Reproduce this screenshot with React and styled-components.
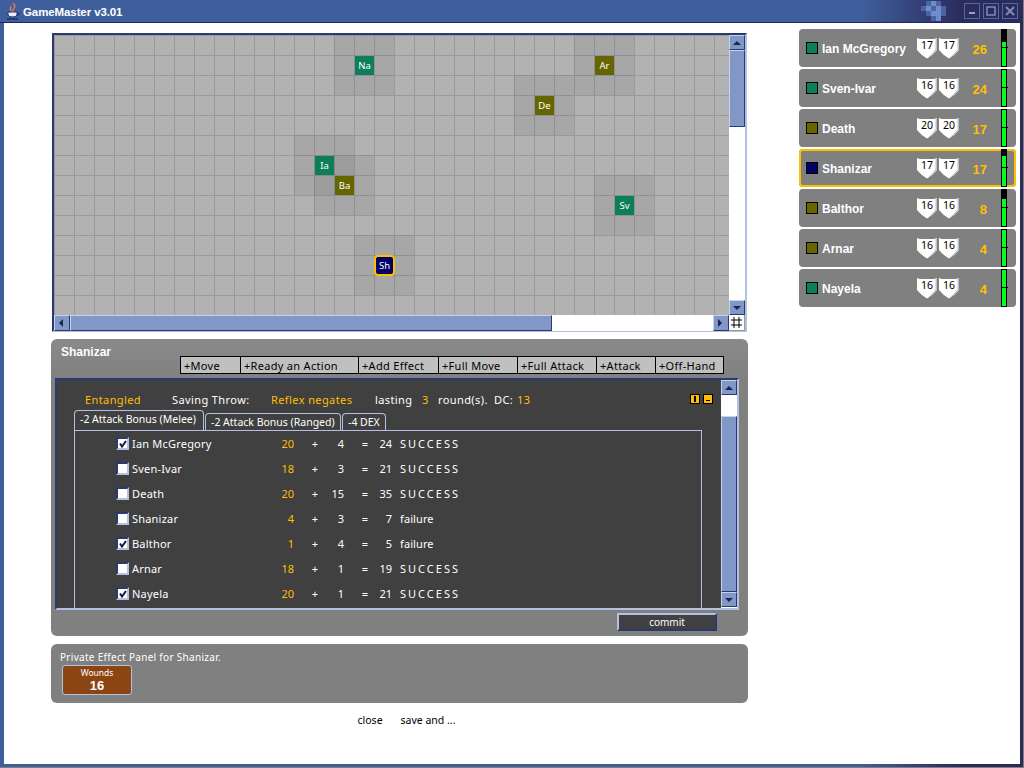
import React from "react";
import styled, { createGlobalStyle } from "styled-components";

const GlobalStyle = createGlobalStyle`
  html, body { margin: 0; padding: 0; background: #fff; }
  body { font-family: "Noto Sans", "DejaVu Sans", sans-serif; font-size: 11px; }
`;

const YELLOW = "#ffbf00";
const LIGHT = "#b4c0e0";
const NAVY = "#2a3a70";
const GREEN = "#0a7f5a";
const OLIVE = "#666600";
const BLUE = "#000066";

const Frame = styled.div`
  width: 1024px;
  height: 768px;
  box-sizing: border-box;
  display: flex;
  flex-direction: column;
  background: linear-gradient(90deg, #3f5f9c 0%, #3f5f9c 84%, #2c2c5c 94%, #2c2c5c 100%);
  border-right: 1px solid #808080;
  border-bottom: 1px solid #808080;
  overflow: hidden;
  padding: 0 3px 3px 4px;
`;

const TitleBar = styled.div`
  height: 22px;
  flex: none;
  margin: 0 -3px 0 -4px;
  padding: 0 5px 0 6px;
  display: flex;
  align-items: center;
  gap: 3px;
  color: #fff;
  font: bold 11.5px "Liberation Sans", sans-serif;
  border-bottom: 1px solid #1e2a58;
`;

const TitleText = styled.span`
  flex: 1;
  letter-spacing: -0.1px;
  margin-top: 1px;
`;

const WinButton = styled.div`
  width: 16px;
  height: 16px;
  box-sizing: border-box;
  border: 1px solid #4a6aa8;
  display: flex;
  align-items: center;
  justify-content: center;
`;

const Body = styled.div`
  flex: 1;
  background: #fff;
  display: flex;
  padding: 10px 4px 0 47px;
  gap: 51px;
`;

const LeftColumn = styled.div`
  width: 697px;
  display: flex;
  flex-direction: column;
`;

const MapFrame = styled.div`
  margin-left: 1px;
  width: 695px;
  height: 299px;
  box-sizing: border-box;
  border: 2px solid;
  border-color: ${NAVY} ${LIGHT} ${LIGHT} ${NAVY};
  display: grid;
  grid-template-columns: 675px 16px;
  grid-template-rows: 280px 16px;
`;

const MapView = styled.div`
  position: relative;
  overflow: hidden;
  background-color: #b2b2b2;
  background-image:
    linear-gradient(90deg, #999 1px, transparent 1px),
    linear-gradient(#999 1px, transparent 1px);
  background-size: 20px 20px;
`;

const Glow = styled.div`
  position: absolute;
  left: ${(p) => p.$x - 20}px;
  top: ${(p) => p.$y - 20}px;
  width: 60px;
  height: 60px;
  background: rgba(0, 0, 0, 0.06);
`;

const Token = styled.div`
  position: absolute;
  left: ${(p) => (p.$active ? p.$x : p.$x + 1)}px;
  top: ${(p) => (p.$active ? p.$y : p.$y + 1)}px;
  width: ${(p) => (p.$active ? 21 : 19)}px;
  height: ${(p) => (p.$active ? 21 : 19)}px;
  box-sizing: border-box;
  background: ${(p) => p.$color};
  color: #fff;
  font-size: 9.5px;
  display: flex;
  align-items: center;
  justify-content: center;
  ${(p) => p.$active && `border: 2px solid ${YELLOW}; border-radius: 4px;`}
`;

const ScrollTrack = styled.div`
  background: #fff;
  display: flex;
  flex-direction: ${(p) => (p.$horizontal ? "row" : "column")};
`;

const ArrowButton = styled.div`
  flex: none;
  width: 16px;
  height: ${(p) => (p.$horizontal ? 16 : 15)}px;
  box-sizing: border-box;
  background: #8097c8;
  border: 1px solid;
  border-color: #c8d2ec ${NAVY} ${NAVY} #c8d2ec;
  display: flex;
  align-items: center;
  justify-content: center;
`;

const Thumb = styled.div`
  box-sizing: border-box;
  background: #8097c8;
  border: 1px solid;
  border-color: #c8d2ec ${NAVY} ${NAVY} #c8d2ec;
  ${(p) => (p.$horizontal ? `width: ${p.$size}px;` : `height: ${p.$size}px;`)}
`;

const Spacer = styled.div`
  flex: 1;
  ${(p) => p.$size && `flex: none; ${p.$horizontal ? "width" : "height"}: ${p.$size}px;`}
`;

const Corner = styled.div`
  display: flex;
  align-items: center;
  justify-content: center;
  background: #fff;
  border-right: 1px solid #999;
  border-bottom: 1px solid #999;
`;

const Panel = styled.div`
  margin-top: ${(p) => p.$top}px;
  height: ${(p) => p.$height}px;
  background: ${(p) => (p.$flat ? "#808080" : "linear-gradient(#8a8a8a, #808080 40px)")};
  border-radius: 6px;
  color: #fff;
  position: relative;
  display: flex;
  flex-direction: column;
`;

const PanelHead = styled.div`
  height: 39px;
  flex: none;
  display: flex;
  box-sizing: border-box;
  padding: 6px 24px 0 10px;
`;

const PanelTitle = styled.div`
  font: bold 12px "Liberation Sans", sans-serif;
  width: 119px;
`;

const Toolbar = styled.div`
  display: flex;
  width: 544px;
  height: 18px;
  margin-top: 11px;
  background: #c0c0c0;
  border: 1px solid #000;
  box-sizing: border-box;
`;

const ToolButton = styled.div`
  width: ${(p) => p.$w}px;
  box-sizing: border-box;
  border-right: 1px solid #000;
  color: #000;
  padding-left: 3px;
  line-height: 17px;
  letter-spacing: 0.3px;
  &:last-child { border-right: 0; }
`;

const Pane = styled.div`
  margin: 0 9px 0 4px;
  height: 232px;
  flex: none;
  box-sizing: border-box;
  display: flex;
  background: #404040;
  border: 2px solid;
  border-color: ${NAVY} ${LIGHT} ${LIGHT} ${NAVY};
  overflow: hidden;
`;

const PaneMain = styled.div`
  flex: 1;
  display: flex;
  flex-direction: column;
  padding: 9px 19px 0 17px;
  min-width: 0;
`;

const EffectRow = styled.div`
  display: flex;
  height: 20px;
  flex: none;
  align-items: center;
  padding-left: 11px;
  letter-spacing: 0.4px;
`;

const Cell = styled.span`
  width: ${(p) => p.$w}px;
  flex: none;
  color: ${(p) => (p.$accent ? YELLOW : "#fff")};
`;

const MiniButtons = styled.div`
  margin-left: auto;
  display: flex;
  gap: 3px;
  margin-right: -11px;
  margin-top: -1px;
`;

const MiniButton = styled.div`
  width: 10px;
  height: 10px;
  box-sizing: border-box;
  background: ${YELLOW};
  border: 1px solid #000;
  display: flex;
  align-items: ${(p) => (p.$minus ? "flex-end" : "center")};
  justify-content: center;
  padding-bottom: ${(p) => (p.$minus ? 2 : 0)}px;
  &::after {
    content: "";
    display: block;
    background: #000;
    width: ${(p) => (p.$minus ? 4 : 2)}px;
    height: ${(p) => (p.$minus ? 1 : 6)}px;
  }
`;

const TabStrip = styled.div`
  display: flex;
  align-items: flex-end;
  height: 21px;
  flex: none;
  gap: 1px;
`;

const Tab = styled.div`
  box-sizing: border-box;
  width: ${(p) => p.$w}px;
  height: ${(p) => (p.$active ? 20 : 17)}px;
  border: 1px solid ${LIGHT};
  border-bottom: 0;
  border-radius: 4px 4px 0 0;
  padding: 1px 0 0 5px;
  font-size: 10.5px;
  white-space: nowrap;
`;

const TabBody = styled.div`
  flex: 1;
  box-sizing: border-box;
  border: 1px solid ${LIGHT};
  border-bottom: 0;
`;

const Row = styled.div`
  height: 25px;
  display: flex;
  align-items: center;
`;

const Check = styled.div`
  margin-left: 41px;
  width: 13px;
  height: 13px;
  box-sizing: border-box;
  flex: none;
  background: #fff;
  border: 2px solid;
  border-color: ${NAVY} ${LIGHT} ${LIGHT} ${NAVY};
  display: flex;
  align-items: center;
  justify-content: center;
`;

const Name = styled.span`
  margin-left: 3px;
  width: 140px;
  letter-spacing: 0.2px;
`;

const Num = styled.span`
  width: ${(p) => p.$w}px;
  text-align: right;
  color: ${(p) => (p.$accent ? YELLOW : "#fff")};
  flex: none;
`;

const Result = styled.span`
  margin-left: 8px;
  letter-spacing: ${(p) => (p.$caps ? 2 : 0.1)}px;
`;

const PaneBar = styled.div`
  width: 16px;
  flex: none;
  background: #fff;
  display: flex;
  flex-direction: column;
  margin-left: auto;
`;

const CommitRow = styled.div`
  display: flex;
  justify-content: flex-end;
  padding: 3px 31px 0 0;
`;

const Commit = styled.div`
  width: 100px;
  height: 18px;
  box-sizing: border-box;
  background: #404040;
  border: 2px solid;
  border-color: ${LIGHT} ${NAVY} ${NAVY} ${LIGHT};
  text-align: center;
  font-size: 10px;
  line-height: 14px;
`;

const PrivateText = styled.div`
  padding: 6px 0 0 9px;
  height: 21px;
  box-sizing: border-box;
  font-size: 10px;
  letter-spacing: 0.3px;
`;

const Wounds = styled.div`
  margin-left: 11px;
  width: 70px;
  height: 30px;
  box-sizing: border-box;
  background: #8b4513;
  border: 1px solid ${LIGHT};
  border-radius: 3px;
  text-align: center;
  font-size: 8.5px;
  line-height: 12px;
  padding-top: 1px;
`;

const WoundValue = styled.div`
  font: bold 13px/14px "Liberation Sans", sans-serif;
`;

const Footer = styled.div`
  margin-top: 10px;
  display: flex;
  justify-content: center;
  gap: 18px;
  color: #000;
  padding-left: 14px;
  font-size: 10.5px;
  line-height: 15px;
`;

const Roster = styled.div`
  width: 217px;
  display: flex;
  flex-direction: column;
  gap: 2px;
  margin-top: -4px;
`;

const Card = styled.div`
  height: 38px;
  box-sizing: border-box;
  background: #808080;
  border-radius: 4px;
  display: flex;
  align-items: center;
  padding-left: 7px;
  color: #fff;
  ${(p) => p.$active && `box-shadow: inset 0 0 0 2px ${YELLOW};`}
`;

const Swatch = styled.div`
  width: 12px;
  height: 12px;
  flex: none;
  box-sizing: border-box;
  background: ${(p) => p.$color};
  border: 1px solid #000;
`;

const CardName = styled.div`
  width: 95px;
  margin: 1px 0 0 4px;
  font: bold 12px "Liberation Sans", sans-serif;
`;

const Shields = styled.div`
  display: flex;
  gap: 2px;
`;

const Hp = styled.div`
  width: 28px;
  margin-top: 2px;
  text-align: right;
  color: ${YELLOW};
  font: bold 13px "Liberation Sans", sans-serif;
`;

const HpBar = styled.div`
  margin-left: 14px;
  width: 6px;
  height: 38px;
  box-sizing: border-box;
  background: #000;
  border: 1px solid #000;
  display: flex;
  flex-direction: column;
  justify-content: flex-end;
  position: relative;
  &::after {
    content: "";
    position: absolute;
    left: 0;
    right: -2px;
    top: 17px;
    height: 1px;
    background: #000;
  }
`;

const HpFill = styled.div`
  background: #00ff22;
  flex: none;
`;

const tokens = [
  { label: "Na", x: 300, y: 20, color: GREEN },
  { label: "Ar", x: 540, y: 20, color: OLIVE },
  { label: "De", x: 480, y: 60, color: OLIVE },
  { label: "Ia", x: 260, y: 120, color: GREEN },
  { label: "Ba", x: 280, y: 140, color: OLIVE },
  { label: "Sv", x: 560, y: 160, color: GREEN },
  { label: "Sh", x: 320, y: 220, color: BLUE, active: true },
];

const roster = [
  { name: "Ian McGregory", color: GREEN, a: 17, b: 17, hp: 26, fill: 24 },
  { name: "Sven-Ivar", color: GREEN, a: 16, b: 16, hp: 24, fill: 36 },
  { name: "Death", color: OLIVE, a: 20, b: 20, hp: 17, fill: 36 },
  { name: "Shanizar", color: BLUE, a: 17, b: 17, hp: 17, fill: 30, active: true },
  { name: "Balthor", color: OLIVE, a: 16, b: 16, hp: 8, fill: 27 },
  { name: "Arnar", color: OLIVE, a: 16, b: 16, hp: 4, fill: 36 },
  { name: "Nayela", color: GREEN, a: 16, b: 16, hp: 4, fill: 36 },
];

const rolls = [
  { name: "Ian McGregory", on: true, roll: 20, bonus: 4, total: 24, result: "SUCCESS" },
  { name: "Sven-Ivar", on: false, roll: 18, bonus: 3, total: 21, result: "SUCCESS" },
  { name: "Death", on: false, roll: 20, bonus: 15, total: 35, result: "SUCCESS" },
  { name: "Shanizar", on: false, roll: 4, bonus: 3, total: 7, result: "failure" },
  { name: "Balthor", on: true, roll: 1, bonus: 4, total: 5, result: "failure" },
  { name: "Arnar", on: false, roll: 18, bonus: 1, total: 19, result: "SUCCESS" },
  { name: "Nayela", on: true, roll: 20, bonus: 1, total: 21, result: "SUCCESS" },
];

const actions = [
  ["+Move", 60],
  ["+Ready an Action", 118],
  ["+Add Effect", 80],
  ["+Full Move", 79],
  ["+Full Attack", 79],
  ["+Attack", 59],
  ["+Off-Hand", 67],
];

// blocks of the title bar ornament: column, row, lighter or not
const dots = [
  [1, 0, 0], [2, 0, 1], [3, 0, 0],
  [0, 1, 0], [1, 1, 1], [2, 1, 0], [3, 1, 1], [4, 1, 0],
  [1, 2, 0], [2, 2, 1], [3, 2, 1], [4, 2, 0],
  [2, 3, 0], [3, 3, 1],
];

const Arrow = ({ dir }) => {
  const points = {
    up: "1,6 9,6 5,2",
    down: "1,2 9,2 5,6",
    left: "6,0 6,8 2,4",
    right: "2,0 2,8 6,4",
  }[dir];
  return (
    <svg width="10" height="8" viewBox="0 0 10 8">
      <polygon points={points} fill="#1e2450" />
    </svg>
  );
};

const Shield = ({ value }) => (
  <svg width="20" height="21" viewBox="0 0 20 21">
    <path d="M0 0 L3 1 L17 1 L20 0 L20 12 Q16 17 10 20.5 Q4 17 0 12 Z" fill="#fff" />
    <path d="M20 0 L20 12 Q16 17 10 20.5 Q15 16 18.5 11.5 L18.5 1 Z" fill="#c0c0c0" />
    <text x="10" y="11" textAnchor="middle" fontSize="10.5" fill="#000" fontFamily="Noto Sans, sans-serif">
      {value}
    </text>
  </svg>
);

const CoffeeIcon = () => (
  <svg width="14" height="17" viewBox="0 0 14 17">
    <path d="M7 0 Q10 3 8 5 Q6 7 8 9" stroke="#e8704a" strokeWidth="1.6" fill="none" />
    <path d="M5 3 Q3 6 6 9" stroke="#d8a080" strokeWidth="1" fill="none" />
    <path d="M2 9 H11 V12 Q10 14 6.5 14 Q3 14 2 12 Z" fill="#e8ecf8" stroke="#26306c" strokeWidth="1" />
    <path d="M11 10 H13 V12 H11" stroke="#26306c" strokeWidth="1" fill="none" />
    <path d="M1 16 H12" stroke="#26306c" strokeWidth="1.6" />
  </svg>
);

const Dots = () => (
  <svg width="25" height="20" viewBox="0 0 25 20" style={{ marginRight: 15 }}>
    {dots.map(([c, r, on]) => (
      <rect key={`${c}-${r}`} x={c * 5} y={r * 5} width="5" height="5" fill={on ? "#6f8ccb" : "#4a64a8"} />
    ))}
  </svg>
);

const GridIcon = () => (
  <svg width="11" height="11" viewBox="0 0 11 11">
    <path d="M3 0 V11 M8 0 V11 M0 3 H11 M0 8 H11" stroke="#000" strokeWidth="1" fill="none" />
  </svg>
);

const Tick = () => (
  <svg width="8" height="8" viewBox="0 0 8 8">
    <path d="M1 3.5 L3 6.5 L7 1" stroke="#14183c" strokeWidth="2" fill="none" />
  </svg>
);

const App = () => (
  <>
    <GlobalStyle />
    <Frame>
      <TitleBar>
        <CoffeeIcon />
        <TitleText>GameMaster v3.01</TitleText>
        <Dots />
        <WinButton>
          <svg width="8" height="8" viewBox="0 0 8 8"><rect x="1" y="5" width="6" height="2" fill="#8fa4d0" /></svg>
        </WinButton>
        <WinButton>
          <svg width="10" height="10" viewBox="0 0 10 10"><rect x="1" y="1" width="8" height="8" fill="none" stroke="#8fa4d0" strokeWidth="1.2" /></svg>
        </WinButton>
        <WinButton>
          <svg width="10" height="10" viewBox="0 0 10 10"><path d="M1 1 L9 9 M9 1 L1 9" stroke="#7f8db5" strokeWidth="2" /></svg>
        </WinButton>
      </TitleBar>
      <Body>
        <LeftColumn>
          <MapFrame>
            <MapView>
              {tokens.map((t) => <Glow key={t.label} $x={t.x} $y={t.y} />)}
              {tokens.map((t) => (
                <Token key={t.label} $x={t.x} $y={t.y} $color={t.color} $active={t.active}>{t.label}</Token>
              ))}
            </MapView>
            <ScrollTrack>
              <ArrowButton><Arrow dir="up" /></ArrowButton>
              <Thumb $size={77} />
              <Spacer />
              <ArrowButton><Arrow dir="down" /></ArrowButton>
            </ScrollTrack>
            <ScrollTrack $horizontal>
              <ArrowButton $horizontal><Arrow dir="left" /></ArrowButton>
              <Thumb $horizontal $size={482} />
              <Spacer />
              <ArrowButton $horizontal><Arrow dir="right" /></ArrowButton>
            </ScrollTrack>
            <Corner><GridIcon /></Corner>
          </MapFrame>
          <Panel $top={7} $height={297}>
            <PanelHead>
              <PanelTitle>Shanizar</PanelTitle>
              <Toolbar>
                {actions.map(([label, w]) => <ToolButton key={label} $w={w}>{label}</ToolButton>)}
              </Toolbar>
            </PanelHead>
            <Pane>
              <PaneMain>
                <EffectRow>
                  <Cell $w={87} $accent>Entangled</Cell>
                  <Cell $w={99}>Saving Throw:</Cell>
                  <Cell $w={104} $accent>Reflex negates</Cell>
                  <Cell $w={47}>lasting</Cell>
                  <Cell $w={16} $accent>3</Cell>
                  <Cell $w={56}>round(s).</Cell>
                  <Cell $w={23}>DC:</Cell>
                  <Cell $w={20} $accent>13</Cell>
                  <MiniButtons>
                    <MiniButton />
                    <MiniButton $minus />
                  </MiniButtons>
                </EffectRow>
                <TabStrip>
                  <Tab $active $w={130}>-2 Attack Bonus (Melee)</Tab>
                  <Tab $w={136}>-2 Attack Bonus (Ranged)</Tab>
                  <Tab $w={44}>-4 DEX</Tab>
                </TabStrip>
                <TabBody>
                  {rolls.map((r) => (
                    <Row key={r.name}>
                      <Check>{r.on && <Tick />}</Check>
                      <Name>{r.name}</Name>
                      <Num $w={22} $accent>{r.roll}</Num>
                      <Num $w={24}>+</Num>
                      <Num $w={26}>{r.bonus}</Num>
                      <Num $w={24}>=</Num>
                      <Num $w={24}>{r.total}</Num>
                      <Result $caps={r.result === "SUCCESS"}>{r.result}</Result>
                    </Row>
                  ))}
                </TabBody>
              </PaneMain>
              <PaneBar>
                <ArrowButton><Arrow dir="up" /></ArrowButton>
                <Spacer $size={21} />
                <Thumb $size={176} />
                <ArrowButton><Arrow dir="down" /></ArrowButton>
              </PaneBar>
            </Pane>
            <CommitRow><Commit>commit</Commit></CommitRow>
          </Panel>
          <Panel $top={8} $height={59} $flat>
            <PrivateText>Private Effect Panel for Shanizar.</PrivateText>
            <Wounds>
              Wounds
              <WoundValue>16</WoundValue>
            </Wounds>
          </Panel>
          <Footer>
            <span>close</span>
            <span>save and ...</span>
          </Footer>
        </LeftColumn>
        <Roster>
          {roster.map((c) => (
            <Card key={c.name} $active={c.active}>
              <Swatch $color={c.color} />
              <CardName>{c.name}</CardName>
              <Shields>
                <Shield value={c.a} />
                <Shield value={c.b} />
              </Shields>
              <Hp>{c.hp}</Hp>
              <HpBar>
                <HpFill style={{ height: c.fill }} />
              </HpBar>
            </Card>
          ))}
        </Roster>
      </Body>
    </Frame>
  </>
);

export default App;
